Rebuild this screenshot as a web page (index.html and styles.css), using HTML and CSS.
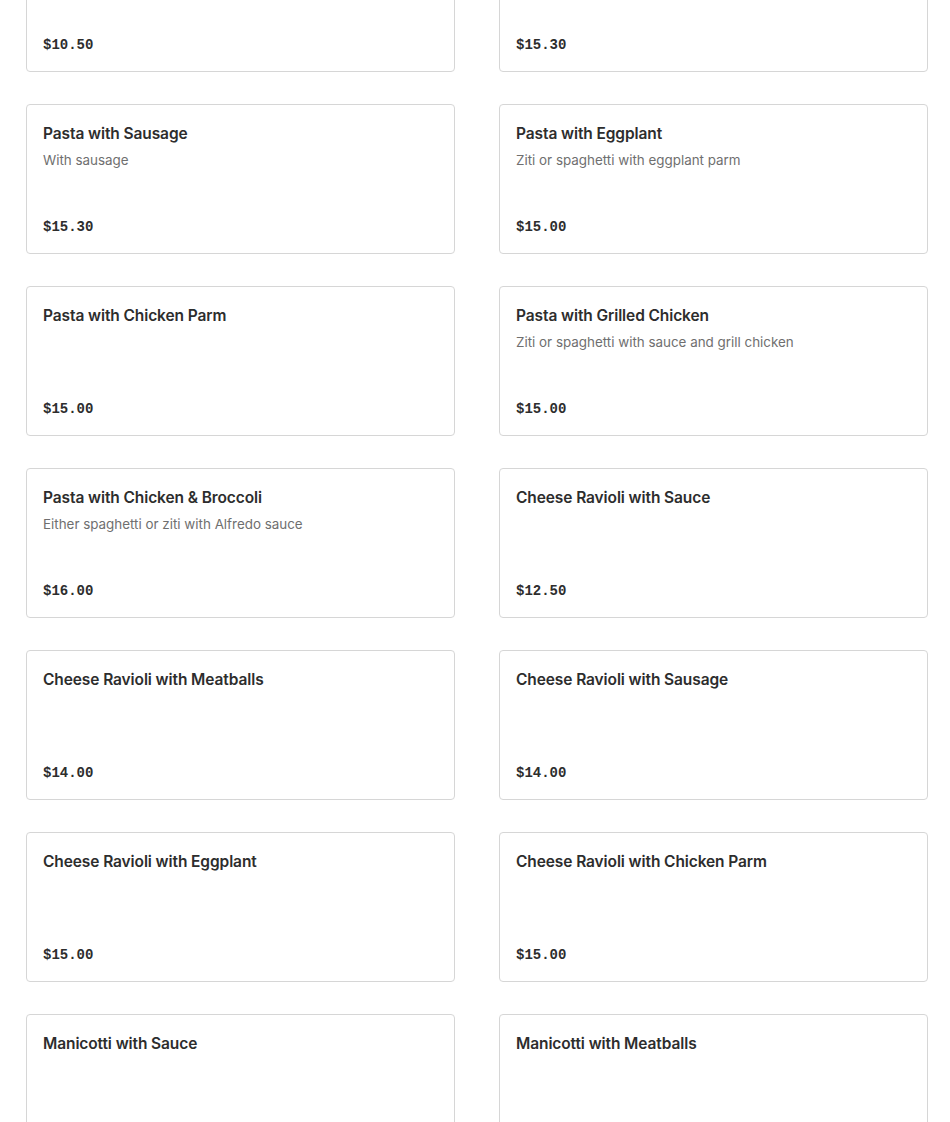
FILE: index.html
```html
<!DOCTYPE html>
<html>
<head>
<meta charset="utf-8">
<link rel="stylesheet" href="styles.css">
</head>
<body>
<div class="menu">
  <div class="card"><div class="name"></div><div class="desc"></div><div class="price">$10.50</div></div>
  <div class="card"><div class="name"></div><div class="desc"></div><div class="price">$15.30</div></div>

  <div class="card"><div class="name">Pasta with Sausage</div><div class="desc">With sausage</div><div class="price">$15.30</div></div>
  <div class="card"><div class="name">Pasta with Eggplant</div><div class="desc">Ziti or spaghetti with eggplant parm</div><div class="price">$15.00</div></div>

  <div class="card"><div class="name">Pasta with Chicken Parm</div><div class="desc"></div><div class="price">$15.00</div></div>
  <div class="card"><div class="name">Pasta with Grilled Chicken</div><div class="desc">Ziti or spaghetti with sauce and grill chicken</div><div class="price">$15.00</div></div>

  <div class="card"><div class="name">Pasta with Chicken &amp; Broccoli</div><div class="desc">Either spaghetti or ziti with Alfredo sauce</div><div class="price">$16.00</div></div>
  <div class="card"><div class="name">Cheese Ravioli with Sauce</div><div class="desc"></div><div class="price">$12.50</div></div>

  <div class="card"><div class="name">Cheese Ravioli with Meatballs</div><div class="desc"></div><div class="price">$14.00</div></div>
  <div class="card"><div class="name">Cheese Ravioli with Sausage</div><div class="desc"></div><div class="price">$14.00</div></div>

  <div class="card"><div class="name">Cheese Ravioli with Eggplant</div><div class="desc"></div><div class="price">$15.00</div></div>
  <div class="card"><div class="name">Cheese Ravioli with Chicken Parm</div><div class="desc"></div><div class="price">$15.00</div></div>

  <div class="card"><div class="name">Manicotti with Sauce</div><div class="desc"></div><div class="price">$15.00</div></div>
  <div class="card"><div class="name">Manicotti with Meatballs</div><div class="desc"></div><div class="price">$15.00</div></div>
</div>
</body>
</html>
```
FILE: styles.css
```css
html, body {
  margin: 0;
  padding: 0;
  background: #ffffff;
  overflow: hidden;
}
body {
  font-family: "Inter", "Open Sans", sans-serif;
  color: #2b2b2b;
}
.menu {
  display: grid;
  grid-template-columns: 429px 429px;
  column-gap: 44px;
  row-gap: 32px;
  padding: 0 22px 0 26px;
  margin-top: -78px;
}
.card {
  box-sizing: border-box;
  height: 150px;
  border: 1px solid #d6d6d6;
  border-radius: 4px;
  padding: 19px 16px 16px 16px;
  display: flex;
  flex-direction: column;
}
.name {
  font-size: 15.5px;
  font-weight: 600;
  line-height: 20px;
  height: 20px;
  color: #2d2d2d;
  letter-spacing: -0.1px;
}
.desc {
  margin-top: 6px;
  font-size: 13.4px;
  line-height: 20px;
  height: 20px;
  color: #6f6f6f;
}
.price {
  margin-top: auto;
  font-family: "Liberation Mono", "DejaVu Sans Mono", monospace;
  font-weight: 700;
  font-size: 14px;
  line-height: 20px;
  color: #2d2d2d;
}
```
